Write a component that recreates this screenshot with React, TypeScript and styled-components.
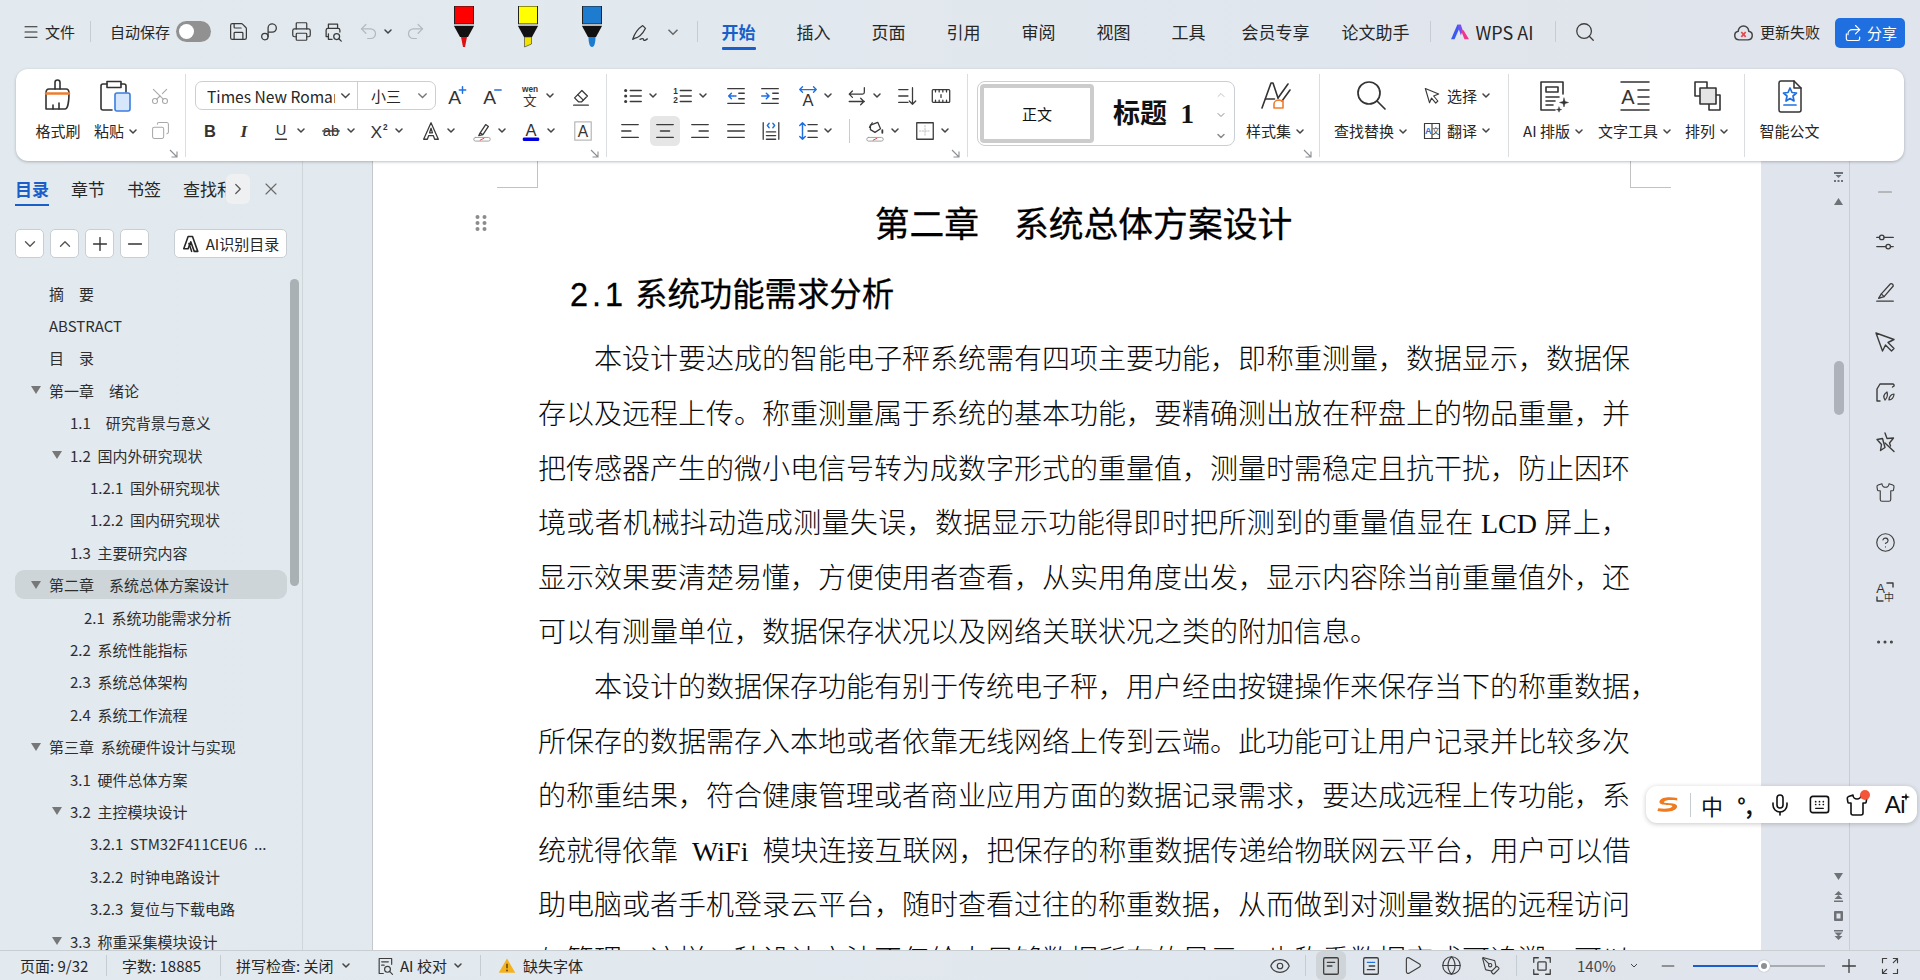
import React from 'react';
import styled, { createGlobalStyle } from 'styled-components';
import {
  Save, Printer, Undo2, Redo2, Search, X, ChevronDown, ChevronUp, ChevronRight, Plus, Minus,
  Eye, Globe, Play, PenTool, Mic, Shirt, CircleHelp, Scissors, Copy, Ellipsis,
} from 'lucide-react';

const UI = `"Noto Sans CJK SC", "Liberation Sans", sans-serif`;
const LAT = `"Liberation Sans", "Noto Sans CJK SC", sans-serif`;
const SERIF = `"Liberation Serif", "Noto Sans CJK SC", serif`;

const Global = createGlobalStyle`
  html, body { margin: 0; padding: 0; background: #e1e7ee; }
  #root { width: 1920px; height: 980px; }
  * { box-sizing: border-box; }
`;

const Root = styled.div`
  position: relative; width: 1920px; height: 980px; overflow: hidden; display: flex; flex-direction: column;
  background: linear-gradient(90deg, #e2eaef 0%, #e1e8ee 40%, #e0e4ec 100%);
  font-family: ${UI}; color: #262626; font-size: 15px;
`;

/* ---------- top bar ---------- */
const TopBar = styled.header`
  height: 69px; flex: none; display: flex; align-items: center; padding: 0 15px 6px 22px; white-space: nowrap;
`;
const Plain = styled.span<{ $ml?: number; $w?: number; $c?: string; $size?: number }>`
  margin-left: ${p => p.$ml ?? 0}px; ${p => (p.$w ? `width:${p.$w}px;` : '')} flex: none; white-space: pre;
  color: ${p => p.$c ?? '#262626'}; font-size: ${p => p.$size ?? 15}px; line-height: 22px;
`;
const VLine = styled.i<{ $ml?: number; $h?: number }>`
  display: block; flex: none; width: 1px; height: ${p => p.$h ?? 21}px; background: #c5ccd2; margin-left: ${p => p.$ml ?? 0}px;
`;
const Toggle = styled.span`
  display: flex; align-items: center; margin-left: 6px; width: 35px; height: 21px; border-radius: 11px; background: #919191; padding-left: 3px; flex: none;
  &::before { content: ''; width: 15px; height: 15px; border-radius: 50%; background: #fff; }
`;
const Tab = styled.span<{ $active?: boolean; $ml?: number }>`
  position: relative; flex: none; font-size: 17px; line-height: 24px; margin-left: ${p => p.$ml ?? 41}px;
  color: ${p => (p.$active ? '#1a5fc9' : '#262626')}; font-weight: ${p => (p.$active ? 700 : 400)};
  ${p => p.$active ? `&::after { content:''; position:absolute; left:0; right:0; bottom:-6px; height:3px; background:#1a5fc9; border-radius:1px; }` : ''}
`;
const Pen = styled.span<{ $w: number }>`
  display: flex; align-self: flex-start; margin-top: 6px; flex: none; width: ${p => p.$w}px; height: 42px;
`;
const RightTop = styled.div`
  margin-left: auto; display: flex; align-items: center;
`;
const ShareBtn = styled.button`
  border: 0; width: 70px; height: 30px; margin-left: 15px; background: #1f6fe0; border-radius: 5px; color: #fff; display: flex; align-items: center; justify-content: center; gap: 4px; font: 15px ${UI}; padding: 0; margin-top: 2px;
`;

/* ---------- ribbon ---------- */
const Ribbon = styled.section`
  position: relative; z-index: 3; flex: none; height: 92px; margin: 0 16px; background: #fff; border-radius: 12px;
  box-shadow: 0 1px 3px rgba(60, 70, 80, .35); display: flex; white-space: nowrap;
`;
const Group = styled.div<{ $w?: number }>`
  position: relative; flex: ${p => (p.$w ? 'none' : '1')}; ${p => (p.$w ? `width:${p.$w}px;` : '')} display: flex; align-items: flex-start; height: 100%;
`;
const Sep = styled.i`
  display: block; flex: none; width: 1px; height: 83px; margin-top: 5px; background: #dadee1;
`;
const Launcher = styled.svg`
  position: absolute; right: 7px; bottom: 3px; width: 9px; height: 9px; color: #8b8f93;
`;
const Stack = styled.div<{ $ml?: number; $w?: number }>`
  flex: none; padding-top: 9px; margin-left: ${p => p.$ml ?? 0}px; ${p => (p.$w ? `width:${p.$w}px;` : '')}
`;
const Row = styled.div<{ $pl?: number }>`
  height: 35px; display: flex; align-items: center; padding-left: ${p => p.$pl ?? 0}px;
`;
const Tool = styled.div<{ $w?: number; $ml?: number }>`
  flex: none; display: flex; align-items: center; ${p => (p.$w ? `width:${p.$w}px;` : '')} margin-left: ${p => p.$ml ?? 0}px;
`;
const Box = styled.span<{ $on?: boolean; $c?: string }>`
  flex: none; width: 22px; height: 22px; display: flex; align-items: center; justify-content: center; color: ${p => p.$c ?? '#3a3a3a'};
  border-radius: 2px; ${p => (p.$on ? 'background:#e6e6e6; box-shadow:0 0 0 4px #e6e6e6;' : '')}
`;
const Chev = styled.svg<{ $ml?: number }>`
  flex: none; width: 8px; height: 5px; margin-left: ${p => p.$ml ?? 5}px; color: #444;
`;
const SelectChev = styled.svg<{ $ml?: number; $c?: string }>`
  flex: none; width: 11px; height: 7px; margin-left: ${p => p.$ml ?? 2}px; color: ${p => p.$c ?? '#444'};
`;
const TopChev = styled.svg`
  flex: none; width: 12px; height: 8px; color: #666; margin-left: -10px; margin-right: 17.5px;
`;
const Large = styled.div<{ $w: number; $ml: number }>`
  flex: none; width: ${p => p.$w}px; margin-left: ${p => p.$ml}px; padding-top: 4px; display: flex; flex-direction: column; align-items: center;
`;
const LargeIcon = styled.span`
  height: 46px; display: flex; align-items: center; justify-content: center; color: #333;
`;
const LargeLabel = styled.span`
  height: 24px; line-height: 24px; display: flex; align-items: center; font-size: 15px;
`;
const FontBox = styled.div`
  margin-left: 9px; width: 241px; height: 29px; border: 1px solid #c9cfd4; border-radius: 7px; display: flex; align-items: center; flex: none;
`;
const FontName = styled.span`
  width: 128px; margin-left: 11px; overflow: hidden; font-size: 15.6px; line-height: 20px;
`;
const FontSize = styled.span`
  width: 44px; margin-left: 13px; font-size: 15px; line-height: 20px;
`;
const FontDiv = styled.i`
  width: 1px; height: 27px; background: #c9cfd4; margin-left: 6px; flex: none;
`;
const StyleBox = styled.div`
  flex: none; margin: 12px 0 0 9px; width: 258px; height: 65px; border: 1px solid #c9cfd4; border-radius: 8px; display: flex; align-items: center;
`;
const StyleCard = styled.div`
  flex: none; width: 114px; height: 59px; margin-left: 2px; border: 4px solid #ccc; border-radius: 4px; display: flex; align-items: center; justify-content: center; font-size: 15px; color: #111;
`;
const StyleHead = styled.div`
  flex: none; width: 110px; padding-left: 19px; font-family: ${SERIF}; font-weight: 700; font-size: 27px; color: #111; white-space: pre; line-height: 40px;
`;
const StyleArrows = styled.div`
  margin-left: 10px; width: 14px; height: 60px; display: flex; flex-direction: column; align-items: center; justify-content: space-between; padding: 5px 0 2px; color: #8a8a8a;
`;

/* ---------- main ---------- */
const Main = styled.main`
  flex: 1; min-height: 0; display: flex; overflow: hidden;
`;
const Sidebar = styled.aside`
  position: relative; flex: none; width: 303px; border-right: 1px solid #cfd6da; display: flex; flex-direction: column;
`;
const SideTabs = styled.div`
  flex: none; height: 46px; padding: 13px 0 0 15px; display: flex; align-items: flex-start;
`;
const SideClip = styled.div`
  width: 211px; display: flex; gap: 22px; overflow: hidden; flex: none; padding-bottom: 4px;
`;
const SideTab = styled.span<{ $active?: boolean }>`
  flex: none; font-size: 17px; line-height: 30px; color: ${p => (p.$active ? '#1a5fc9' : '#262626')}; font-weight: ${p => (p.$active ? 700 : 400)};
  border-bottom: 2px solid ${p => (p.$active ? '#1a5fc9' : 'transparent')};
`;
const SideMore = styled.span`
  flex: none; width: 24px; height: 30px; background: #eef0f1; border-radius: 6px; display: flex; align-items: center; justify-content: center; color: #555;
`;
const SideClose = styled.span`
  margin-left: 11px; height: 30px; display: flex; align-items: center; color: #6a6a6a; flex: none;
`;
const SideTools = styled.div`
  flex: none; height: 29px; margin-top: 22px; padding-left: 15px; display: flex; gap: 6px;
`;
const SquareBtn = styled.span`
  flex: none; width: 29px; height: 29px; background: #fff; border: 1px solid #c8ced2; border-radius: 5px; display: flex; align-items: center; justify-content: center; color: #555;
`;
const AiBtn = styled.span`
  flex: none; margin-left: 19px; width: 113px; height: 29px; background: #fff; border: 1px solid #c8ced2; border-radius: 5px; display: flex; align-items: center; justify-content: center; gap: 3px; font-size: 15px;
`;
const TreeWrap = styled.div`
  position: relative; flex: 1; margin-top: 19px; overflow: hidden;
`;
const SideThumb = styled.i`
  position: absolute; left: 290px; top: 2px; width: 9px; height: 307px; border-radius: 5px; background: #a9b1b4;
`;
const TreeRow = styled.div<{ $x: number; $on?: boolean }>`
  position: relative; height: 32.4px; display: flex; align-items: center; padding-left: ${p => p.$x - 19}px; white-space: pre; color: #2e2e2e; font-size: 15px;
  ${p => (p.$on ? `&::before { content:''; position:absolute; left:15px; width:272px; top:1px; bottom:2px; background:#cdd5d9; border-radius:9px; }` : '')}
`;
const Caret = styled.span<{ $open?: boolean }>`
  position: relative; flex: none; width: 19px; height: 8px;
  ${p => (p.$open ? `&::before { content:''; position:absolute; left:1px; top:0; border-left:5px solid transparent; border-right:5px solid transparent; border-top:8px solid #777; }` : '')}
`;
const TreeText = styled.span`
  position: relative;
`;
const DocArea = styled.div`
  flex: none; width: 70px;
`;
const Page = styled.article`
  position: relative; flex: none; width: 1388px; background: #fff; box-shadow: -1px 0 0 #c4c8cc; padding: 39px 132px 0 165px; overflow: hidden;
`;
const Corner = styled.i<{ $right?: boolean }>`
  position: absolute; top: 0; width: 41px; height: 27px; border-bottom: 1px solid #c2c2c2;
  ${p => (p.$right ? 'left:1257px; border-left:1px solid #c2c2c2;' : 'left:124px; border-right:1px solid #c2c2c2;')}
`;
const Grip = styled.svg`
  position: absolute; left: 102px; top: 53px; width: 12px; height: 18px; color: #8c8c8c;
`;
const DocTitle = styled.h1`
  margin: 0; height: 44px; line-height: 44px; text-align: center; font-size: 34.8px; font-weight: 400; color: #000; white-space: pre; -webkit-text-stroke: .3px #000;
`;
const DocSub = styled.h2`
  margin: 26px 0 0 32px; height: 44px; line-height: 44px; font-size: 32.4px; font-weight: 400; color: #000; white-space: pre; -webkit-text-stroke: .3px #000;
`;
const SubNum = styled.span`
  font-family: ${LAT}; letter-spacing: 4px; margin-right: 8px;
`;
const Body = styled.div`
  margin-top: 19.4px;
`;
const Line = styled.div<{ $first?: boolean; $last?: boolean }>`
  height: 54.6px; line-height: 54.6px; font-family: ${SERIF}; font-size: 28px; font-weight: 300; color: #0a0a0a; white-space: pre;
  text-align: justify; text-align-last: ${p => (p.$last ? 'left' : 'justify')}; text-justify: inter-character;
  ${p => (p.$first ? 'padding-left: 56px;' : '')}
`;
const ScrollCol = styled.div`
  flex: none; width: 89px; border-right: 1px solid #c9ced4; display: flex; flex-direction: column; align-items: flex-end; padding: 11px 5px 9px 0; color: #6e7277;
`;
const ScrollIcon = styled.svg<{ $mt?: number }>`
  flex: none; width: 11px; height: 12px; margin-top: ${p => p.$mt ?? 0}px;
`;
const ScrollThumb = styled.i`
  flex: none; width: 10px; height: 54px; margin-top: 153px; border-radius: 5px; background: #adb2bb;
`;
const Spacer = styled.div`
  flex: 1;
`;
const Rail = styled.nav`
  flex: 1; display: flex; flex-direction: column; align-items: center; padding-top: 19px; gap: 26px; color: #3c3c3c;
`;
const RailItem = styled.span`
  width: 24px; height: 24px; display: flex; align-items: center; justify-content: center;
`;

/* ---------- status ---------- */
const StatusBar = styled.footer`
  position: relative; z-index: 2; flex: none; height: 30px; border-top: 1px solid #c9ced3; display: flex; align-items: center; padding: 0 18px 0 20px; white-space: nowrap; color: #333;
`;
const StatusRight = styled.div`
  margin-left: auto; display: flex; align-items: center; height: 100%;
`;
const SIcon = styled.span<{ $ml?: number; $w?: number }>`
  flex: none; display: flex; align-items: center; justify-content: center; width: ${p => p.$w ?? 24}px; height: 24px; margin-left: ${p => p.$ml ?? 0}px; color: #3e3e3e;
`;
const ViewOn = styled.span`
  flex: none; margin-left: 10px; width: 30px; height: 29px; background: #cfd4d9; border-radius: 6px; display: flex; align-items: center; justify-content: center; color: #3e3e3e;
`;
const Zoom = styled.div`
  position: relative; flex: none; margin-left: 13px; width: 132px; height: 2px; background: #a8adb2;
`;
const ZoomFill = styled.i`
  display: block; height: 2px; background: #1a5fc9;
`;
const ZoomKnob = styled.i`
  position: absolute; top: -5px; width: 12px; height: 12px; margin-left: -6px; border-radius: 50%; background: #8b9096; border: 3px solid #fff; box-shadow: 0 0 1px #888;
`;

/* ---------- IME ---------- */
const Ime = styled.div`
  position: absolute; left: 1646px; top: 786px; z-index: 5; width: 271px; height: 37px; background: #fff; border-radius: 11px; box-shadow: 0 1px 5px rgba(0, 0, 0, .22); display: flex; align-items: center; padding-left: 10px; color: #111;
`;
const ImeCell = styled.span<{ $ml?: number; $size?: number; $bold?: boolean }>`
  position: relative; flex: none; width: 24px; height: 24px; margin-left: ${p => p.$ml ?? 0}px; display: flex; align-items: center; justify-content: center; font-size: ${p => p.$size ?? 21}px; font-weight: ${p => (p.$bold ? 700 : 400)}; line-height: 24px; color: #111;
`;
const ImeDot = styled.i`
  position: absolute; right: -1px; top: -3px; width: 10px; height: 10px; border-radius: 50%; background: #f4553a;
`;
const ImeAi = styled.span`
  font-family: ${LAT}; font-size: 24px; letter-spacing: -.5px;
`;
const ImeStar = styled.svg`
  position: absolute; right: -3px; top: 0; width: 8px; height: 8px;
`;

/* ---------- icons ---------- */
const Icon: React.FC<{ w?: number; h?: number; vb?: string; sw?: number; children: React.ReactNode }> = ({ w = 22, h, vb, sw = 1.4, children }) => (
  <svg width={w} height={h ?? w} viewBox={vb ?? `0 0 24 24`} fill="none" stroke="currentColor" strokeWidth={sw} strokeLinecap="round" strokeLinejoin="round">
    {children}
  </svg>
);
const Txt: React.FC<{ x: number; y: number; s: number; b?: boolean; c?: string; f?: string; it?: boolean; children: React.ReactNode }> = ({ x, y, s, b, c = '#333', f = 'Liberation Sans', it, children }) => (
  <text x={x} y={y} fontSize={s} fontWeight={b ? 700 : 400} fontStyle={it ? 'italic' : 'normal'} fill={c} stroke="none" fontFamily={`"${f}", "Noto Sans CJK SC", sans-serif`} textAnchor="middle">{children}</text>
);
const ChevPath = <path d="M1 1l3 3 3-3" fill="none" stroke="currentColor" strokeWidth="1.500" strokeLinecap="round" strokeLinejoin="round" />;
const ThinPath = <path d="M1 1l3 3 3-3" fill="none" stroke="currentColor" strokeWidth="1" />;
const Down: React.FC<{ ml?: number }> = ({ ml }) => <Chev viewBox="0 0 8 5" $ml={ml}>{ChevPath}</Chev>;
const Launch = () => (
  <Launcher viewBox="0 0 9 9"><path d="M1 1l6.500 6.500M8 2.500V8H2.500" fill="none" stroke="currentColor" strokeWidth="1.100" /></Launcher>
);
const Marker: React.FC<{ color: string; tip: React.ReactNode }> = ({ color, tip }) => (
  <svg width="24" height="42" viewBox="0 0 24 42">
    <rect x="2.500" y="0" width="19" height="18" fill={color} stroke="#222" strokeWidth="1" />
    <rect x="2" y="18" width="20" height="2" fill="#b8b8b8" />
    <path d="M2 20h20l-6 11H8z" fill="#111" />
    {tip}
  </svg>
);
const Lines: React.FC<{ rows: [number, number, number][]; sw?: number; c?: string }> = ({ rows, sw = 1.500, c }) => (
  <g stroke={c ?? 'currentColor'} strokeWidth={sw}>
    {rows.map((r, i) => <path key={i} d={`M${r[0]} ${r[2]}H${r[1]}`} />)}
  </g>
);
const BLUE = '#1f6fe0';

const ic = {
  menu: <Icon w={18}><path d="M4 5h16M4 12h16M4 19h16" /></Icon>,
  pin: <Icon><circle cx="7.500" cy="17" r="3.500" /><path d="M11 17V7.500a4.500 4.500 0 1 1 4.500 4.700H11" /></Icon>,
  preview: <Icon><path d="M7 8V3.500h10V8" /><path d="M7 17H4.500V10a2 2 0 0 1 2-2h11a2 2 0 0 1 2 2v2M7 14v6h4" /><circle cx="16" cy="17" r="3.200" /><path d="M18.400 19.400L21 22" /></Icon>,
  pen: <Icon w={24}><path d="M4 20c2-6 5-11 11-15l3 3c-3 6-7 10-12 11zM15 5l3 3" /><path d="M12 20c2-1 4-1 4 .5s2 .5 4-1" /></Icon>,
  brush: <Icon w={36} vb="0 0 36 36" sw={1.600}><path d="M15 11V4.500a2.500 2.500 0 0 1 5 0V11" /><path d="M6 15c0-2.500 1-4 3-4h17c2 0 3 1.500 3 4M6 15v16h19c3 0 4-9 4-16" /><path d="M6 15.500h23" stroke="#ee7d31" strokeWidth="2.400" /><path d="M13 31v-4M19 31v-6" /></Icon>,
  paste: <Icon w={36} vb="0 0 36 36" sw={1.600}><path d="M14 32H5a2 2 0 0 1-2-2V8a2 2 0 0 1 2-2h4M23 6h3a2 2 0 0 1 2 2v6" /><path d="M9 3.500h14v6H9z" /><rect x="17" y="15" width="15" height="18" rx="2" fill="#d6e6fb" stroke="#3b7de0" /></Icon>,
  aPlus: <Icon><Txt x={9.500} y={21} s={21}>A</Txt><path d="M18 2v7M14.500 5.500h7" stroke={BLUE} strokeWidth="1.600" /></Icon>,
  aMinus: <Icon><Txt x={9.500} y={21} s={21}>A</Txt><path d="M15 5.500h7" stroke={BLUE} strokeWidth="1.600" /></Icon>,
  wen: <Icon><Txt x={12} y={8} s={9} b>wen</Txt><Txt x={12} y={23} s={15}>文</Txt></Icon>,
  eraser: <Icon><path d="M5 14l8-8 6 6-6.500 6.500h-3z" /><path d="M8.500 10.500l6 6" /><path d="M4 22h16" /></Icon>,
  bold: <Icon><Txt x={12} y={18} s={18} b>B</Txt></Icon>,
  italic: <Icon><Txt x={12} y={18} s={19} b it f="Liberation Serif">I</Txt></Icon>,
  under: <Icon><Txt x={12} y={16} s={16}>U</Txt><path d="M6 21h12" /></Icon>,
  strike: <Icon><Txt x={12} y={17} s={16}>ab</Txt><path d="M3 12h18" /></Icon>,
  sup: <Icon><Txt x={9} y={20} s={19}>X</Txt><Txt x={19} y={11} s={9} b>2</Txt></Icon>,
  outline: <Icon><path d="M12 3l-8 18h4l1.500-4h5l1.500 4h4z" /><path d="M12 9l-1.600 5h3.200z" /></Icon>,
  hilite: <Icon><path d="M10 14l6-9 3 2-6 9zM10 14l-1.500 3 4.500-1" /><rect x="3" y="19" width="18" height="4" rx="2" stroke="#999" strokeWidth="1" /><path d="M10 22l4-2" stroke="#e23c3c" strokeWidth="1" /></Icon>,
  aBlue: <Icon><Txt x={12} y={17} s={18}>A</Txt><rect x="3" y="19" width="18" height="4" rx="1.500" fill="#0000e0" stroke="none" /></Icon>,
  aBox: <Icon><rect x="3" y="2" width="18" height="20" stroke="#bbb" /><Txt x={12} y={18} s={17}>A</Txt></Icon>,
  bullets: <Icon><g fill="currentColor" stroke="none"><circle cx="4" cy="6" r="1.700" /><circle cx="4" cy="12" r="1.700" /><circle cx="4" cy="18" r="1.700" /></g><Lines rows={[[9, 21, 6], [9, 21, 12], [9, 21, 18]]} /></Icon>,
  numbered: <Icon><Txt x={4} y={10} s={9} b>1</Txt><Txt x={4} y={20} s={9} b>2</Txt><Lines rows={[[9, 21, 6], [9, 21, 12], [9, 21, 18]]} /></Icon>,
  outdent: <Icon><Lines rows={[[3, 21, 4], [15, 21, 9], [15, 21, 15], [3, 21, 20]]} /><path d="M12 12H4M7 9l-3 3 3 3" stroke={BLUE} strokeWidth="1.600" /></Icon>,
  indent: <Icon><Lines rows={[[3, 21, 4], [15, 21, 9], [15, 21, 15], [3, 21, 20]]} /><path d="M3 12h8M8 9l3 3-3 3" stroke={BLUE} strokeWidth="1.600" /></Icon>,
  asian: <Icon><path d="M3 5h18M6 2L3 5l3 3M18 2l3 3-3 3" stroke={BLUE} strokeWidth="1.500" /><Txt x={12} y={23} s={18}>A</Txt></Icon>,
  dir: <Icon><path d="M20 3v5a2 2 0 0 1-2 2H4M7 6.500L3.500 10 7 13.500" /><path d="M3.500 18H20M16 14.500l3.500 3.500-3.500 3.500" /></Icon>,
  sort: <Icon><Lines rows={[[3, 13, 5], [3, 13, 12], [3, 13, 19]]} /><path d="M18 3v18M14.500 17.500L18 21l3.500-3.500" /></Icon>,
  ruler: <Icon><rect x="2.500" y="5" width="19" height="14" rx="1" /><path d="M6 5v2.500M10 5v2.500M14 5v2.500M18 5v2.500M6 19v-2.500M10 19v-2.500M14 19v-2.500M18 19v-2.500M12 10.500v3" /></Icon>,
  left: <Icon><Lines rows={[[3, 21, 5], [3, 13, 12], [3, 21, 19]]} /></Icon>,
  center: <Icon><Lines rows={[[3, 21, 5], [7, 17, 12], [3, 21, 19]]} /></Icon>,
  right: <Icon><Lines rows={[[3, 21, 5], [11, 21, 12], [3, 21, 19]]} /></Icon>,
  justify: <Icon><Lines rows={[[3, 21, 5], [3, 21, 12], [3, 21, 19]]} /></Icon>,
  dist: <Icon><path d="M3.500 3v18M20.500 3v18" /><path d="M10 3.500L8 6l2 2.500M14 3.500L16 6l-2 2.500" stroke={BLUE} strokeWidth="1.500" /><Lines rows={[[7, 17, 13], [7, 17, 17], [7, 17, 21]]} /></Icon>,
  spacing: <Icon><path d="M6 3v18M3 6l3-3 3 3M3 18l3 3 3-3" stroke={BLUE} strokeWidth="1.600" /><Lines rows={[[12, 22, 5], [12, 22, 12], [12, 22, 19]]} /></Icon>,
  fill: <Icon><path d="M7 5.500l8-3 3 7-6 4-5-3z" /><path d="M9 3l-3 5" /><path d="M20 11v3" strokeWidth="2" /><rect x="3" y="19" width="18" height="4" rx="2" stroke="#999" strokeWidth="1" /><path d="M10 22l4-2" stroke="#e23c3c" strokeWidth="1" /></Icon>,
  border: <Icon><rect x="3" y="3" width="18" height="18" /><path d="M12 6v12M6 12h12" stroke="#bbb" strokeWidth="1" strokeDasharray="1.500 1.500" /></Icon>,
  styles: <Icon w={36} vb="0 0 36 36" sw={1.600}><path d="M5 30L14 5h2l5 15" /><path d="M8.500 21h9" /><path d="M31 6L21 20" /><path d="M33 12l-8 11" /><path d="M17 30v-4c0-2 2-4 5-4l4 1v7z" stroke="#ee7d31" /></Icon>,
  bigSearch: <Icon w={36} vb="0 0 36 36" sw={1.700}><circle cx="16" cy="15" r="11" /><path d="M24 23l8 8" /></Icon>,
  cursor: <Icon w={20}><path d="M4 3l16 6.500-6 2.500 5 6-2.500 2.500-5-6L9 20z" /></Icon>,
  translate: <Icon w={20}><rect x="3" y="3" width="18" height="18" /><path d="M12 3v18" /><Txt x={7.500} y={16} s={11} b c={BLUE}>A</Txt><Txt x={16.500} y={16} s={9}>文</Txt></Icon>,
  aiDoc: <Icon w={34} vb="0 0 34 34" sw={1.600}><path d="M27 15V3H5v28h14" /><rect x="10" y="8" width="12" height="5" /><path d="M10 18h13M10 22h9M10 26h7" /><path d="M28 19l1 3.500 3.500 1-3.500 1-1 3.500-1-3.500-3.500-1 3.500-1zM23 28l.6 2 2 .6-2 .6-.6 2-.6-2-2-.6 2-.6z" fill="currentColor" strokeWidth=".5" /></Icon>,
  textTool: <Icon w={34} vb="0 0 34 34" sw={1.500}><path d="M3 3h28M3 31h28" /><Txt x={10} y={25} s={20}>A</Txt><path d="M20 11h11M20 18h11M20 25h11" /></Icon>,
  arrange: <Icon w={34} vb="0 0 34 34" sw={1.600}><rect x="5" y="3" width="12" height="14" /><rect x="19" y="16" width="11" height="15" /><rect x="10" y="9" width="16" height="16" fill="#e4e4e4" /></Icon>,
  gov: <Icon w={34} vb="0 0 34 34" sw={1.500}><path d="M21 2H8a2 2 0 0 0-2 2v27a2 2 0 0 0 2 2h18a2 2 0 0 0 2-2V9z" /><path d="M21 2v7h7" /><path d="M17 9l2 4.500 4.500.5-3.500 3 1 5-4-2.500-4 2.500 1-5-3.500-3 4.500-.5z" stroke={BLUE} strokeWidth="1.700" /><path d="M11 26h12" stroke={BLUE} strokeWidth="1.700" /></Icon>,
  aiLogo: <Icon w={21} vb="0 0 24 24" sw={1.800}><path d="M7 4l-5 14h5l3-8 4 11h4L12 4z" /><path d="M8 12l3 9" /></Icon>,
  sliders: <Icon><path d="M3 7h3M11 7h10M3 17h10M18 17h3" /><circle cx="8.500" cy="7" r="2.500" /><circle cx="15.500" cy="17" r="2.500" /></Icon>,
  knife: <Icon><path d="M3 22h18" /><path d="M5 19l3-5L18 3c2-.5 3 1 3 2.500L11 17z" /><path d="M8 14l3 3" /></Icon>,
  cursorBig: <Icon w={24}><path d="M3 3l18 6.500-6 3 6 6-2.500 2.500-6-6-3 6z" /></Icon>,
  shirtLeaf: <Icon w={24}><path d="M7 21H4V9l3-5h13a1.500 1.500 0 0 1 1 2l-1.500 1" /><path d="M12 20c-2-3-1-6 2-8 1 3 0 6-2 8zM16 20c0-3 2-6 5-6 0 3-2 6-5 6z" strokeWidth="1.200" /></Icon>,
  starCursor: <Icon w={24}><path d="M12 3l2 5.500 6.500-.5-4 5 1 3M12 17.500l-4.500 3 1-6L4 9.500l5.500-1z" /><path d="M12 13l9 8.500" /></Icon>,
  aZh: <Icon w={24}><Txt x={7.500} y={13} s={13}>A</Txt><Txt x={16} y={21} s={10}>中</Txt><path d="M14 3h6v4M10 21H4v-4" /></Icon>,
  doc: <Icon w={22}><rect x="4" y="3" width="16" height="18" rx="1.500" /><path d="M8 8h8M8 12h5" /></Icon>,
  docOutline: <Icon w={22}><rect x="4" y="3" width="16" height="18" rx="1.500" /><path d="M8 8h8" stroke={BLUE} strokeDasharray="1.500 1" /><path d="M10 12h6M8 16h8" /></Icon>,
  focus: <Icon w={22}><path d="M3 8V3h5M16 3h5v5M3 16v5h5M16 21h5v-5" /><rect x="7.500" y="7.500" width="9" height="9" rx="1" /></Icon>,
  full: <Icon w={20}><path d="M3 8V3h5M21 8V3h-5M3 16v5h5M21 16v5h-5M16 8l4-4M8 16l-4 4" /></Icon>,
  aiCheck: <Icon w={22}><path d="M20 10V3H5v18h5" /><path d="M8 7h8M8 11h3" /><circle cx="15" cy="16" r="3.500" /><path d="M17.500 18.500L21 22" /></Icon>,
  warn: <svg width="18" height="18" viewBox="0 0 24 24"><path d="M12 2L23 21H1z" fill="#f3b21f" /><path d="M12 9v6" stroke="#7a4b00" strokeWidth="2.200" /><circle cx="12" cy="18" r="1.300" fill="#7a4b00" /></svg>,
  cloud: <svg width="21" height="22" viewBox="0 0 24 24" fill="none"><path d="M7 21a5 5 0 0 1-1-9.900 6 6 0 0 1 12 0A5 5 0 0 1 17 21z" stroke="#444" strokeWidth="1.700" /><path d="M9.500 12l5 5.500M14.500 12l-5 5.500" stroke="#e5484d" strokeWidth="2" /></svg>,
  share: <Icon w={20}><path d="M15 3l5 5-5 5" /><path d="M20 8h-9a5 5 0 0 0-5 5v1" /><path d="M4 13v6a2 2 0 0 0 2 2h12a2 2 0 0 0 2-2v-2" /></Icon>,
  logo: <svg width="20" height="18" viewBox="0 0 22 20"><path d="M1 18L8 2h4L5 18z" fill="#3b5bf0" /><path d="M8 2h4l2 6-2 6z" fill="#7a4df0" /><path d="M12 8l3 0 6 10h-5z" fill="#f0368c" /></svg>,
  sogou: <svg width="24" height="22" viewBox="0 0 26 22"><path d="M23 3.500C16 2 6 2 4 6.500c-1.500 3.500 3 4.500 8 4.500 4 0 6.500.5 5.500 2-1.500 2-9 2.500-15 1.500l-1 3c7 1.500 18 1.500 21-3.500 2-3.500-3-5-8.500-5-3.500 0-6-.3-5.200-1.500C10 5.500 16 5.200 23 6z" fill="#f07a1f" /></svg>,
  kbd: <Icon w={23}><rect x="2.500" y="3.500" width="19" height="17" rx="2.500" strokeWidth="1.700" /><path d="M8 9h.01M12 9h.01M16 9h.01M8 12h.01M12 12h.01M16 12h.01" strokeWidth="1.800" /><path d="M8 16h8" /></Icon>,
};

/* ---------- data ---------- */
const tree: { t: string; x: number; open?: boolean; on?: boolean }[] = [
  { t: '摘　要', x: 49 }, { t: 'ABSTRACT', x: 49 }, { t: '目　录', x: 49 },
  { t: '第一章　绪论', x: 49, open: true }, { t: '1.1　研究背景与意义', x: 70 },
  { t: '1.2  国内外研究现状', x: 70, open: true }, { t: '1.2.1  国外研究现状', x: 90 }, { t: '1.2.2  国内研究现状', x: 90 },
  { t: '1.3  主要研究内容', x: 70 }, { t: '第二章　系统总体方案设计', x: 49, open: true, on: true },
  { t: '2.1  系统功能需求分析', x: 84 }, { t: '2.2  系统性能指标', x: 70 }, { t: '2.3  系统总体架构', x: 70 }, { t: '2.4  系统工作流程', x: 70 },
  { t: '第三章  系统硬件设计与实现', x: 49, open: true }, { t: '3.1  硬件总体方案', x: 70 },
  { t: '3.2  主控模块设计', x: 70, open: true }, { t: '3.2.1  STM32F411CEU6  ...', x: 90 },
  { t: '3.2.2  时钟电路设计', x: 90 }, { t: '3.2.3  复位与下载电路', x: 90 }, { t: '3.3  称重采集模块设计', x: 70, open: true },
];

const body: { t: string; first?: boolean; last?: boolean }[] = [
  { t: '本设计要达成的智能电子秤系统需有四项主要功能，即称重测量，数据显示，数据保', first: true },
  { t: '存以及远程上传。称重测量属于系统的基本功能，要精确测出放在秤盘上的物品重量，并' },
  { t: '把传感器产生的微小电信号转为成数字形式的重量值，测量时需稳定且抗干扰，防止因环' },
  { t: '境或者机械抖动造成测量失误，数据显示功能得即时把所测到的重量值显在 LCD 屏上，' },
  { t: '显示效果要清楚易懂，方便使用者查看，从实用角度出发，显示内容除当前重量值外，还' },
  { t: '可以有测量单位，数据保存状况以及网络关联状况之类的附加信息。', last: true },
  { t: '本设计的数据保存功能有别于传统电子秤，用户经由按键操作来保存当下的称重数据，', first: true, last: true },
  { t: '所保存的数据需存入本地或者依靠无线网络上传到云端。此功能可让用户记录并比较多次' },
  { t: '的称重结果，符合健康管理或者商业应用方面的数据记录需求，要达成远程上传功能，系' },
  { t: '统就得依靠  WiFi  模块连接互联网，把保存的称重数据传递给物联网云平台，用户可以借' },
  { t: '助电脑或者手机登录云平台，随时查看过往的称重数据，从而做到对测量数据的远程访问' },
  { t: '与管理。这样一种设计方法不仅给人足够数据所有的显示，也称重数据完成可追溯，可以' },
];

const B: React.FC<{ w?: number; ml?: number; on?: boolean; c?: string; chev?: boolean; label?: string; children: React.ReactNode }> = ({ w, ml, on, c, chev, label, children }) => (
  <Tool $w={w} $ml={ml}>
    <Box $on={on} $c={c}>{children}</Box>
    {label && <Plain $ml={4}>{label}</Plain>}
    {chev && <Down />}
  </Tool>
);
const L: React.FC<{ w: number; ml: number; label: string; chev?: boolean; children: React.ReactNode }> = ({ w, ml, label, chev, children }) => (
  <Large $w={w} $ml={ml}>
    <LargeIcon>{children}</LargeIcon>
    <LargeLabel>{label}{chev && <Down />}</LargeLabel>
  </Large>
);
const SmallTri: React.FC<{ d: string; mt?: number }> = ({ d, mt }) => (
  <ScrollIcon viewBox="0 0 11 12" $mt={mt}><path d={d} fill="currentColor" /></ScrollIcon>
);

export default function App() {
  return (
    <Root>
      <Global />
      <TopBar>
        {ic.menu}
        <Plain $ml={5}>文件</Plain>
        <VLine $ml={15} />
        <Plain $ml={19}>自动保存</Plain>
        <Toggle />
        <B w={31} ml={16}><Save size={21} strokeWidth={1.4} /></B>
        <B w={32}>{ic.pin}</B>
        <B w={32}><Printer size={21} strokeWidth={1.4} /></B>
        <B w={35}>{ic.preview}</B>
        <B w={47} c="#b3b9be" chev><Undo2 size={21} strokeWidth={1.4} /></B>
        <B w={48} c="#b3b9be"><Redo2 size={21} strokeWidth={1.4} /></B>
        <Pen $w={64}><Marker color="#ff0000" tip={<path d="M9 31h6l-2 10h-2z" fill="#e01010" />} /></Pen>
        <Pen $w={64}><Marker color="#ffff00" tip={<path d="M8.500 31h7v7l-7 3z" fill="#f2e200" stroke="#333" strokeWidth=".6" />} /></Pen>
        <Pen $w={49}><Marker color="#1e7cd0" tip={<path d="M8.500 31h7c0 5-1 10-3.500 10S8.500 36 8.500 31z" fill="#1e7cd0" />} /></Pen>
        <B w={48}>{ic.pen}</B>
        <TopChev viewBox="0 0 8 5">{ThinPath}</TopChev>
        <VLine />
        <Tab $active $ml={24}>开始</Tab>
        <Tab>插入</Tab><Tab>页面</Tab><Tab>引用</Tab><Tab>审阅</Tab><Tab>视图</Tab><Tab>工具</Tab>
        <Tab $ml={36}>会员专享</Tab>
        <Tab $ml={32}>论文助手</Tab>
        <VLine $ml={20} />
        <SIcon $w={20} $ml={19}>{ic.logo}</SIcon>
        <Plain $ml={6} $size={18}>WPS AI</Plain>
        <VLine $ml={21} />
        <SIcon $ml={17}><Search size={22} strokeWidth={1.4} /></SIcon>
        <RightTop>
          {ic.cloud}
          <Plain $ml={6} $w={60}>更新失败</Plain>
          <ShareBtn>{ic.share}分享</ShareBtn>
        </RightTop>
      </TopBar>

      <Ribbon>
        <Group $w={169}>
          <L w={44} ml={20} label="格式刷">{ic.brush}</L>
          <L w={41} ml={15} label="粘贴" chev>{ic.paste}</L>
          <Stack $ml={13}>
            <Row><B c="#a8a8a8"><Scissors size={20} strokeWidth={1.3} style={{ transform: 'rotate(-90deg)' }} /></B></Row>
            <Row><B c="#a8a8a8"><Copy size={19} strokeWidth={1.3} style={{ transform: 'scaleX(-1)' }} /></B></Row>
          </Stack>
          <Launch />
        </Group>
        <Sep />
        <Group $w={420}>
          <Stack>
            <Row>
              <FontBox>
                <FontName>Times New Roman</FontName>
                <SelectChev $ml={5} viewBox="0 0 8 5">{ThinPath}</SelectChev>
                <FontDiv />
                <FontSize>小三</FontSize>
                <SelectChev $c="#777" viewBox="0 0 8 5">{ThinPath}</SelectChev>
              </FontBox>
              <B w={35} ml={10}>{ic.aPlus}</B>
              <B w={38}>{ic.aMinus}</B>
              <B w={51} chev>{ic.wen}</B>
              <B w={22}>{ic.eraser}</B>
            </Row>
            <Row $pl={13}>
              <B w={34}>{ic.bold}</B>
              <B w={37}>{ic.italic}</B>
              <B w={50} chev>{ic.under}</B>
              <B w={48} chev>{ic.strike}</B>
              <B w={52} chev>{ic.sup}</B>
              <B w={51} chev>{ic.outline}</B>
              <B w={49} chev>{ic.hilite}</B>
              <B w={52} chev>{ic.aBlue}</B>
              <B w={22}>{ic.aBox}</B>
            </Row>
          </Stack>
          <Launch />
        </Group>
        <Sep />
        <Group $w={360}>
          <Stack>
            <Row $pl={15}>
              <B w={50} chev>{ic.bullets}</B>
              <B w={53} chev>{ic.numbered}</B>
              <B w={34}>{ic.outdent}</B>
              <B w={38}>{ic.indent}</B>
              <B w={49} chev>{ic.asian}</B>
              <B w={50} chev>{ic.dir}</B>
              <B w={34}>{ic.sort}</B>
              <B w={22}>{ic.ruler}</B>
            </Row>
            <Row $pl={12}>
              <B w={35}>{ic.left}</B>
              <B w={35} on>{ic.center}</B>
              <B w={36}>{ic.right}</B>
              <B w={35}>{ic.justify}</B>
              <B w={37}>{ic.dist}</B>
              <B w={52} chev>{ic.spacing}</B>
              <VLine $h={24} />
              <B w={50} ml={14} chev>{ic.fill}</B>
              <B w={30} chev>{ic.border}</B>
            </Row>
          </Stack>
          <Launch />
        </Group>
        <Sep />
        <Group $w={351}>
          <StyleBox>
            <StyleCard>正文</StyleCard>
            <StyleHead>标题  1</StyleHead>
            <StyleArrows>
              <ChevronUp size={12} color="#c2c2c2" />
              <ChevronDown size={12} />
              <ChevronDown size={12} strokeWidth={3} />
            </StyleArrows>
          </StyleBox>
          <L w={56} ml={12} label="样式集" chev>{ic.styles}</L>
          <Launch />
        </Group>
        <Sep />
        <Group $w={188}>
          <L w={71} ml={15} label="查找替换" chev>{ic.bigSearch}</L>
          <Stack $ml={15}>
            <Row><B label="选择" chev>{ic.cursor}</B></Row>
            <Row><B label="翻译" chev>{ic.translate}</B></Row>
          </Stack>
        </Group>
        <Sep />
        <Group $w={235}>
          <L w={60} ml={14} label="AI 排版" chev>{ic.aiDoc}</L>
          <L w={71} ml={16} label="文字工具" chev>{ic.textTool}</L>
          <L w={41} ml={16} label="排列" chev>{ic.arrange}</L>
        </Group>
        <Sep />
        <Group>
          <L w={61} ml={14} label="智能公文">{ic.gov}</L>
        </Group>
      </Ribbon>

      <Main>
        <Sidebar>
          <SideTabs>
            <SideClip>
              <SideTab $active>目录</SideTab>
              <SideTab>章节</SideTab>
              <SideTab>书签</SideTab>
              <SideTab>查找和替换</SideTab>
            </SideClip>
            <SideMore><ChevronRight size={18} strokeWidth={1.6} /></SideMore>
            <SideClose><X size={20} strokeWidth={1.4} /></SideClose>
          </SideTabs>
          <SideTools>
            <SquareBtn><ChevronDown size={18} strokeWidth={1.8} /></SquareBtn>
            <SquareBtn><ChevronUp size={18} strokeWidth={1.8} /></SquareBtn>
            <SquareBtn><Plus size={22} strokeWidth={1.5} color="#333" /></SquareBtn>
            <SquareBtn><Minus size={22} strokeWidth={1.5} color="#333" /></SquareBtn>
            <AiBtn>{ic.aiLogo}AI识别目录</AiBtn>
          </SideTools>
          <TreeWrap>
            {tree.map(r => (
              <TreeRow key={r.t} $x={r.x} $on={r.on}>
                <Caret $open={r.open} />
                <TreeText>{r.t}</TreeText>
              </TreeRow>
            ))}
            <SideThumb />
          </TreeWrap>
        </Sidebar>
        <DocArea />
        <Page>
          <Corner />
          <Corner $right />
          <Grip viewBox="0 0 12 18">
            <g fill="currentColor">
              <circle cx="2.500" cy="3" r="2" /><circle cx="9.500" cy="3" r="2" />
              <circle cx="2.500" cy="9" r="2" /><circle cx="9.500" cy="9" r="2" />
              <circle cx="2.500" cy="15" r="2" /><circle cx="9.500" cy="15" r="2" />
            </g>
          </Grip>
          <DocTitle>第二章　系统总体方案设计</DocTitle>
          <DocSub><SubNum>2.1</SubNum>系统功能需求分析</DocSub>
          <Body>
            {body.map(l => (
              <Line key={l.t} $first={l.first} $last={l.last}>{l.t}</Line>
            ))}
          </Body>
        </Page>
        <ScrollCol>
          <SmallTri d="M1 0h9v2H1zM2.500 3h6L5.500 6zM1 8h2v2H1zM4.500 8h2v2h-2zM8 8h2v2H8z" />
          <SmallTri d="M5.500 2l4.500 7H1z" mt={12} />
          <ScrollThumb />
          <Spacer />
          <SmallTri d="M1 2h9L5.500 9z" />
          <SmallTri d="M5.500 0l4 4h-8zM5.500 4l4 4h-8zM1 9.500h9V11H1z" mt={8} />
          <SmallTri d="M2 1h7a1 1 0 0 1 1 1v8a1 1 0 0 1-1 1H2a1 1 0 0 1-1-1V2a1 1 0 0 1 1-1zm1.500 2.500v5h4v-5z" mt={7} />
          <SmallTri d="M1 1h9v1.500H1zM1.500 3.500h8l-4 4zM1.500 7h8l-4 4z" mt={7} />
        </ScrollCol>
        <Rail>
          <RailItem><Minus size={22} strokeWidth={1.3} color="#8a8a8a" /></RailItem>
          <RailItem>{ic.sliders}</RailItem>
          <RailItem>{ic.knife}</RailItem>
          <RailItem>{ic.cursorBig}</RailItem>
          <RailItem>{ic.shirtLeaf}</RailItem>
          <RailItem>{ic.starCursor}</RailItem>
          <RailItem><Shirt size={21} strokeWidth={1.3} /></RailItem>
          <RailItem><CircleHelp size={21} strokeWidth={1.3} /></RailItem>
          <RailItem>{ic.aZh}</RailItem>
          <RailItem><Ellipsis size={22} strokeWidth={1.3} /></RailItem>
        </Rail>
      </Main>

      <StatusBar>
        <Plain $w={70}>页面: 9/32</Plain>
        <VLine $ml={16} />
        <Plain $ml={15} $w={82}>字数: 18885</Plain>
        <VLine $ml={16} />
        <Plain $ml={15} $w={98}>拼写检查: 关闭</Plain>
        <Down ml={8} />
        <SIcon $ml={25} $w={20}>{ic.aiCheck}</SIcon>
        <Plain $ml={5} $w={49}>AI 校对</Plain>
        <Down />
        <VLine $ml={18} />
        <SIcon $ml={16} $w={20}>{ic.warn}</SIcon>
        <Plain $ml={6}>缺失字体</Plain>
        <StatusRight>
          <SIcon><Eye size={22} strokeWidth={1.3} /></SIcon>
          <VLine $ml={13} />
          <ViewOn>{ic.doc}</ViewOn>
          <SIcon $ml={13}>{ic.docOutline}</SIcon>
          <SIcon $ml={17}><Play size={21} strokeWidth={1.3} /></SIcon>
          <SIcon $ml={15}><Globe size={21} strokeWidth={1.3} /></SIcon>
          <SIcon $ml={16}><PenTool size={20} strokeWidth={1.3} /></SIcon>
          <VLine $ml={13} />
          <SIcon $ml={13}>{ic.focus}</SIcon>
          <Plain $ml={23} $w={39} $c="#45494e">140%</Plain>
          <Chev $ml={14} viewBox="0 0 8 5">{ThinPath}</Chev>
          <SIcon $ml={18}><Minus size={20} strokeWidth={1.4} /></SIcon>
          <Zoom>
            <ZoomFill style={{ width: '54%' }} />
            <ZoomKnob style={{ left: '54%' }} />
          </Zoom>
          <SIcon $ml={12}><Plus size={22} strokeWidth={1.4} /></SIcon>
          <SIcon $ml={17}>{ic.full}</SIcon>
        </StatusRight>
      </StatusBar>

      <Ime>
        <ImeCell>{ic.sogou}</ImeCell>
        <VLine $ml={10} $h={24} />
        <ImeCell $ml={9} $size={22}>中</ImeCell>
        <ImeCell $ml={9} $bold>°,</ImeCell>
        <ImeCell $ml={11}><Mic size={24} strokeWidth={1.6} /></ImeCell>
        <ImeCell $ml={15}>{ic.kbd}</ImeCell>
        <ImeCell $ml={14}><Shirt size={26} strokeWidth={1.6} /><ImeDot /></ImeCell>
        <ImeCell $ml={14}>
          <ImeAi>Ai</ImeAi>
          <ImeStar viewBox="0 0 8 8"><path d="M4 0l1 3 3 1-3 1-1 3-1-3-3-1 3-1z" fill="#111" /></ImeStar>
        </ImeCell>
      </Ime>
    </Root>
  );
}
